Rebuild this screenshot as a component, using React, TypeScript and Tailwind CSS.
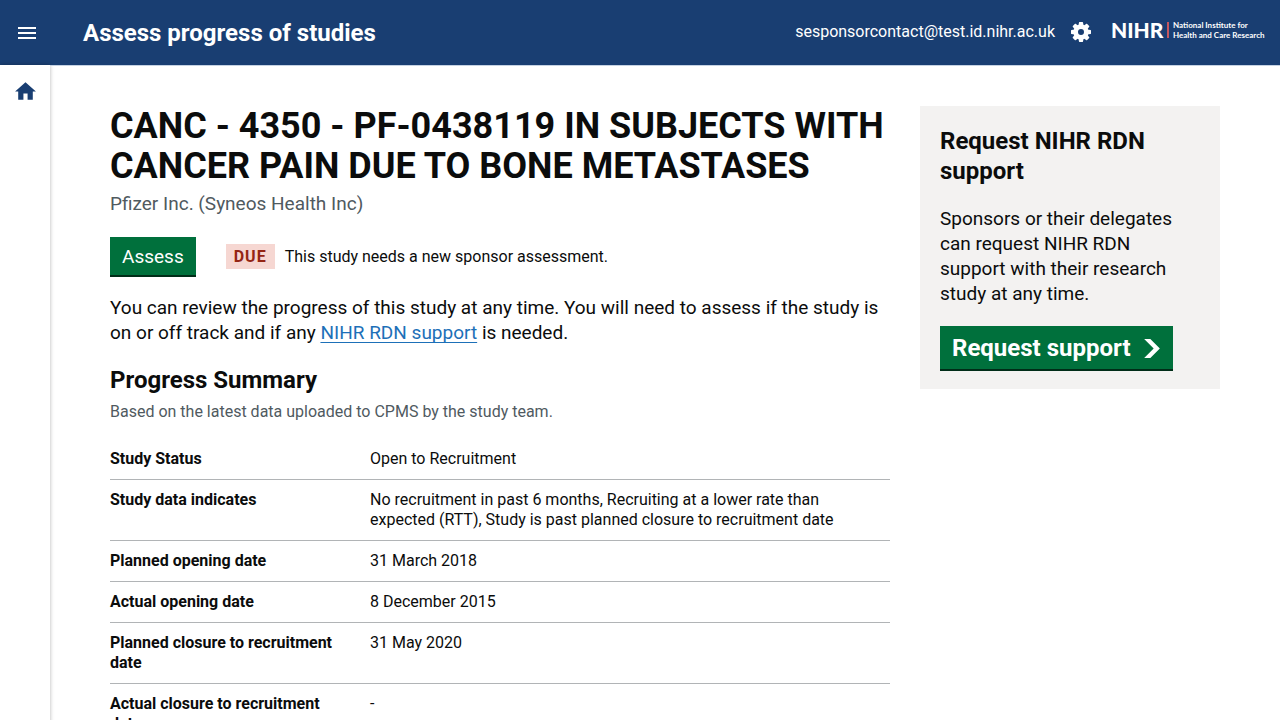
import { MdHome, MdMenu } from 'react-icons/md';

type SummaryRow = { label: string; value: string };

const summaryRows: SummaryRow[] = [
  { label: 'Study Status', value: 'Open to Recruitment' },
  {
    label: 'Study data indicates',
    value:
      'No recruitment in past 6 months, Recruiting at a lower rate than expected (RTT), Study is past planned closure to recruitment date',
  },
  { label: 'Planned opening date', value: '31 March 2018' },
  { label: 'Actual opening date', value: '8 December 2015' },
  { label: 'Planned closure to recruitment date', value: '31 May 2020' },
  { label: 'Actual closure to recruitment date', value: '-' },
];

function GearIcon() {
  const teeth = [0, 45, 90, 135, 180, 225, 270, 315];
  return (
    <svg viewBox="0 0 20 20" className="size-5" fill="currentColor" aria-hidden="true">
      {teeth.map((angle) => (
        <path key={angle} d="M8 0.4Q8 0 8.4 0H11.6Q12 0 12 0.4L12.6 3.6H7.4Z" transform={`rotate(${angle} 10 10)`} />
      ))}
      <path
        fillRule="evenodd"
        d="M10 2.4a7.6 7.6 0 1 0 0 15.2a7.6 7.6 0 1 0 0-15.2ZM10 7a3 3 0 1 1 0 6a3 3 0 1 1 0-6Z"
      />
    </svg>
  );
}

function NihrLogo() {
  return (
    <a
      href="#nihr"
      aria-label="National Institute for Health and Care Research"
      className="flex items-center gap-1 font-['Lato','Liberation_Sans',sans-serif] text-white"
    >
      <span className="w-[52px] text-[21px] leading-5 font-black">NIHR</span>
      <span className="h-4 w-0.5 shrink-0 bg-[#c4575f]" />
      <span className="w-[92px] text-[8px] leading-[10px] font-bold whitespace-nowrap">
        National Institute for
        <br />
        Health and Care Research
      </span>
    </a>
  );
}

function Header() {
  return (
    <header className="flex h-[65px] items-center justify-between bg-[#193e72] px-[15px] text-white">
      <div className="flex items-center">
        <button type="button" aria-label="Open navigation" className="size-6">
          <MdMenu className="size-6" />
        </button>
        <a href="#home" className="ml-11 text-2xl leading-[30px] font-bold">
          Assess progress of studies
        </a>
      </div>
      <div className="flex items-center">
        <div className="flex items-center pb-0.5">
          <span className="text-base leading-5">sesponsorcontact@test.id.nihr.ac.uk</span>
          <button type="button" aria-label="Settings" className="ml-4">
            <GearIcon />
          </button>
        </div>
        <div className="ml-5 pb-1.5">
          <NihrLogo />
        </div>
      </div>
    </header>
  );
}

function SideNav() {
  return (
    <nav aria-label="Main" className="w-[50px] shrink-0 bg-white pt-3.5 shadow-[0_0_4px_rgba(0,0,0,0.3)]">
      <a href="#home" aria-label="Home" className="flex pl-[13px] text-[#193e72]">
        <MdHome className="size-[25px]" />
      </a>
    </nav>
  );
}

function Summary() {
  return (
    <dl className="mt-[17px] text-base leading-5">
      {summaryRows.map((row) => (
        <div key={row.label} className="grid grid-cols-[1fr_2fr] border-b border-[#b1b4b6] py-2.5">
          <dt className="pr-5 font-bold">{row.label}</dt>
          <dd className="pr-5">{row.value}</dd>
        </div>
      ))}
    </dl>
  );
}

function SupportPanel() {
  return (
    <aside className="w-[300px] shrink-0 bg-[#f3f2f1] p-5">
      <h2 className="text-2xl leading-[30px] font-bold">Request NIHR RDN support</h2>
      <p className="mt-5 text-[19px] leading-[25px]">
        Sponsors or their delegates can request NIHR RDN support with their research study at any time.
      </p>
      <a
        href="#request-support"
        className="mt-5 inline-flex items-center gap-3 bg-[#00703c] px-3 pt-2 pb-1.5 text-2xl leading-[29px] font-bold whitespace-nowrap text-white shadow-[0_2px_0_#002d18]"
      >
        Request support
        <svg viewBox="0 0 33 40" className="h-[19px] w-[18px]" fill="currentColor" aria-hidden="true">
          <path d="M0 0h13l20 20-20 20H0l20-20z" />
        </svg>
      </a>
    </aside>
  );
}

export default function App() {
  return (
    <div className="flex min-h-screen flex-col bg-white font-['Roboto','Liberation_Sans',sans-serif] text-[#0b0c0c]">
      <Header />
      <div className="flex flex-1">
        <SideNav />
        <main className="flex flex-1 items-start gap-[30px] border-t border-[#c5d2e3] px-[60px] py-10">
          <div className="min-w-0 flex-1">
            <h1 className="text-4xl leading-10 font-bold">
              CANC - 4350 - PF-0438119 IN SUBJECTS WITH CANCER PAIN DUE TO BONE METASTASES
            </h1>
            <p className="mt-[5px] text-[19px] leading-[25px] text-[#505a5f]">Pfizer Inc. (Syneos Health Inc)</p>
            <div className="mt-[21px] flex items-center">
              <a
                href="#assess"
                className="bg-[#00703c] px-3 pt-2 pb-[7px] text-[19px] leading-[23px] text-white shadow-[0_2px_0_#002d18]"
              >
                Assess
              </a>
              <div className="ml-[30px] flex items-center pt-px">
                <strong className="bg-[#f6d7d2] px-2 pt-[3px] pb-0.5 text-base leading-5 font-bold tracking-[1px] text-[#942514]">
                  DUE
                </strong>
                <span className="ml-2.5 text-base leading-5">This study needs a new sponsor assessment.</span>
              </div>
            </div>
            <p className="mt-5 text-[19px] leading-[25px]">
              You can review the progress of this study at any time. You will need to assess if the study is on or off
              track and if any{' '}
              <a
                href="#rdn-support"
                className="text-[#1d70b8] underline decoration-1 underline-offset-3 [text-decoration-skip-ink:none]"
              >
                NIHR RDN support
              </a>{' '}
              is needed.
            </p>
            <h2 className="mt-5 text-2xl leading-[30px] font-bold">Progress Summary</h2>
            <p className="mt-[7px] text-base leading-5 text-[#505a5f]">
              Based on the latest data uploaded to CPMS by the study team.
            </p>
            <Summary />
          </div>
          <SupportPanel />
        </main>
      </div>
    </div>
  );
}
